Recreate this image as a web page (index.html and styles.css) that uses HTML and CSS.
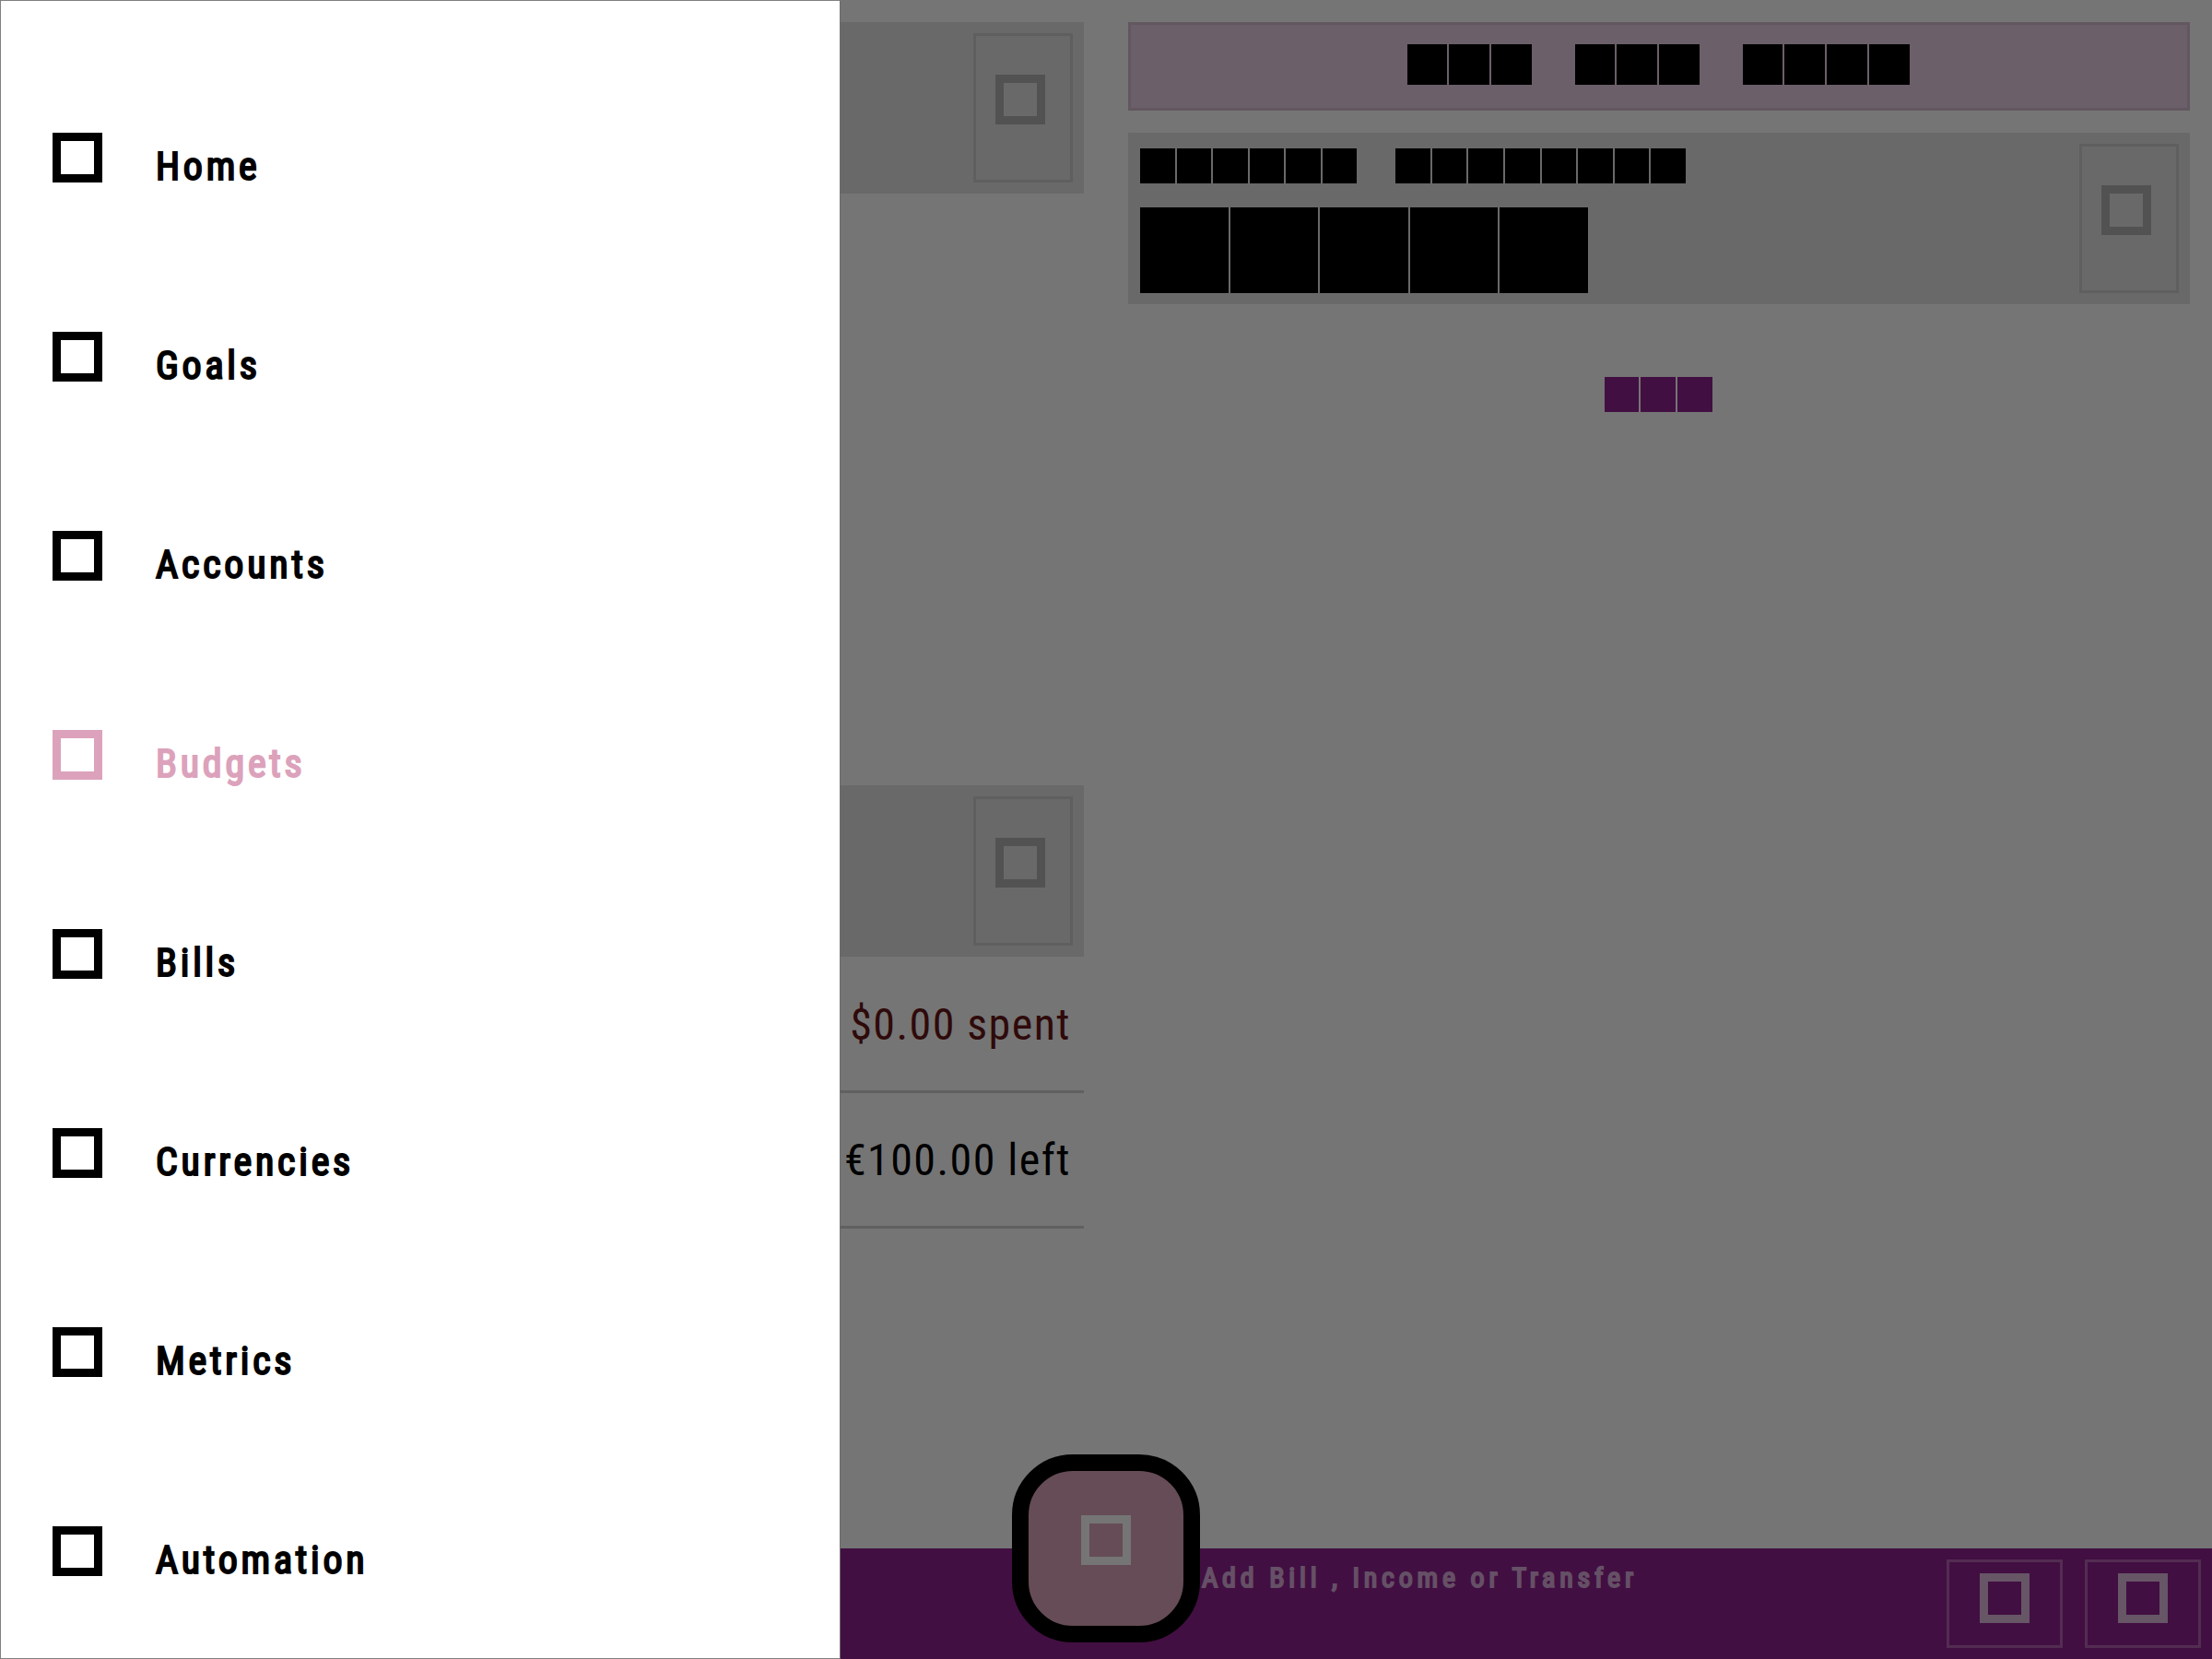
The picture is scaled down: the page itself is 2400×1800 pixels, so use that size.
FILE: index.html
```html
<!DOCTYPE html>
<html lang="en">
<head>
<meta charset="utf-8">
<title>Budgets</title>
<link rel="stylesheet" href="styles.css">
</head>
<body>
<div class="page">
  <main class="columns">
    <div class="budgets">
      <section>
        <div class="card">
          <button class="card-action" type="button" aria-label="Edit"><span class="icon"></span></button>
        </div>
      </section>
      <section>
        <div class="card">
          <button class="card-action" type="button" aria-label="Edit"><span class="icon"></span></button>
        </div>
        <ul class="amounts">
          <li class="amount spent">$0.00 spent</li>
          <li class="amount">€100.00 left</li>
        </ul>
      </section>
    </div>
    <div class="details">
      <div class="banner">
        <span class="blocks date-short"><i></i><i></i><i></i></span>
        <span class="blocks date-short"><i></i><i></i><i></i></span>
        <span class="blocks date-long"><i></i><i></i><i></i><i></i></span>
      </div>
      <div class="card">
        <div class="summary">
          <div class="summary-title">
            <span class="blocks title-first"><i></i><i></i><i></i><i></i><i></i><i></i></span>
            <span class="blocks title-second"><i></i><i></i><i></i><i></i><i></i><i></i><i></i><i></i></span>
          </div>
          <span class="blocks total"><i></i><i></i><i></i><i></i><i></i></span>
        </div>
        <button class="card-action" type="button" aria-label="Edit"><span class="icon"></span></button>
      </div>
      <button class="add" type="button" aria-label="Add"><span class="blocks add-label"><i></i><i></i><i></i></span></button>
    </div>
  </main>
  <footer class="bottom-bar">
    <button class="fab" type="button" aria-label="Add"><span class="icon"></span></button>
    <span class="hint">Add Bill , Income or Transfer</span>
    <div class="tools">
      <button class="tool" type="button" aria-label="Previous"><span class="icon"></span></button>
      <button class="tool" type="button" aria-label="Next"><span class="icon"></span></button>
    </div>
  </footer>
</div>
<nav class="drawer">
  <a class="item" href="#"><span class="icon"></span>Home</a>
  <a class="item" href="#"><span class="icon"></span>Goals</a>
  <a class="item" href="#"><span class="icon"></span>Accounts</a>
  <a class="item current" href="#" aria-current="page"><span class="icon"></span>Budgets</a>
  <a class="item" href="#"><span class="icon"></span>Bills</a>
  <a class="item" href="#"><span class="icon"></span>Currencies</a>
  <a class="item" href="#"><span class="icon"></span>Metrics</a>
  <a class="item" href="#"><span class="icon"></span>Automation</a>
</nav>
</body>
</html>
```
FILE: styles.css
```css
* { box-sizing: border-box; }

body {
  margin: 0;
  background: #757575;
  color: #000;
  font-family: "Roboto Condensed", Roboto, sans-serif;
}

button {
  margin: 0;
  padding: 0;
  border: 0;
  background: none;
  font: inherit;
  color: inherit;
}

.icon {
  display: block;
  flex: none;
  width: 54px;
  height: 54px;
  border: 9px solid currentColor;
}

.page {
  display: flex;
  flex-direction: column;
  min-height: 100vh;
}

.columns {
  flex: 1;
  display: grid;
  grid-template-columns: 1fr 1fr;
  gap: 48px;
  padding: 24px 24px 0;
}

.budgets {
  display: grid;
  grid-template-rows: 1fr 1fr;
}

.card {
  display: flex;
  justify-content: flex-end;
  padding: 12px;
  background: #696969;
}

.card-action {
  display: flex;
  flex: none;
  justify-content: center;
  width: 108px;
  height: 162px;
  padding: 42px 6px 0 0;
  border: 3px solid #5f5f5f;
  color: #525252;
}

.amounts {
  margin: 0;
  padding: 1px 0 0;
  list-style: none;
}

.amount {
  height: 147px;
  padding-right: 14px;
  border-bottom: 3px solid #606060;
  font-size: 48px;
  line-height: 146px;
  letter-spacing: 0.03em;
  text-align: right;
}

.spent { color: #2f0a0a; }

.details {
  display: flex;
  flex-direction: column;
}

.blocks {
  display: flex;
  gap: 2px;
}

.blocks i {
  flex: 1;
  background: currentColor;
}

.banner {
  display: flex;
  justify-content: center;
  gap: 47px;
  height: 96px;
  margin-bottom: 24px;
  padding: 21px 2px 0 0;
  border: 3px solid #62575f;
  background: #6b5f69;
}

.date-short { width: 135px; height: 44px; }
.date-long { width: 181px; height: 44px; }

.summary {
  flex: 1;
  display: flex;
  flex-direction: column;
  gap: 26px;
  padding: 5px 0 0 1px;
}

.summary-title {
  display: flex;
  gap: 42px;
}

.title-first { width: 235px; height: 38px; }
.title-second { width: 315px; height: 38px; }
.total { width: 486px; height: 93px; }

.add {
  align-self: center;
  margin-top: 79px;
  padding-right: 2px;
  color: #420f42;
}

.add-label { width: 117px; height: 38px; }

.bottom-bar {
  display: grid;
  grid-template-columns: 1fr 204px 1fr;
  height: 120px;
  background: #420f42;
}

.fab {
  display: flex;
  grid-column: 2;
  grid-row: 1;
  justify-content: center;
  width: 204px;
  height: 204px;
  margin-top: -102px;
  padding-top: 48px;
  border: 18px solid #000;
  border-radius: 66px;
  background: #664c56;
  color: #757575;
}

.hint {
  grid-column: 3;
  grid-row: 1;
  padding: 12px 0 0 2px;
  color: #655066;
  font-size: 30px;
  line-height: 40px;
  letter-spacing: 0.16em;
  -webkit-text-stroke: 2px currentColor;
}

.tools {
  display: flex;
  grid-column: 3;
  grid-row: 1;
  gap: 24px;
  justify-self: end;
  padding: 12px 12px 0 0;
}

.tool {
  display: flex;
  justify-content: center;
  width: 126px;
  height: 96px;
  padding-top: 12px;
  border: 3px solid #532d52;
  color: #665666;
}

.drawer {
  position: fixed;
  top: 0;
  bottom: 0;
  left: 0;
  width: 38%;
  padding-top: 71px;
  border: 1px solid #808080;
  border-right-color: #6c6c6c;
  background: #fff;
  overflow: hidden;
}

.item {
  display: flex;
  gap: 58px;
  align-items: center;
  height: 216px;
  padding-left: 56px;
  color: #000;
  font-size: 42px;
  letter-spacing: 0.09em;
  text-decoration: none;
  -webkit-text-stroke: 2px currentColor;
}

.item .icon { margin-bottom: 18px; }

.current { color: #dca2bb; }
```
